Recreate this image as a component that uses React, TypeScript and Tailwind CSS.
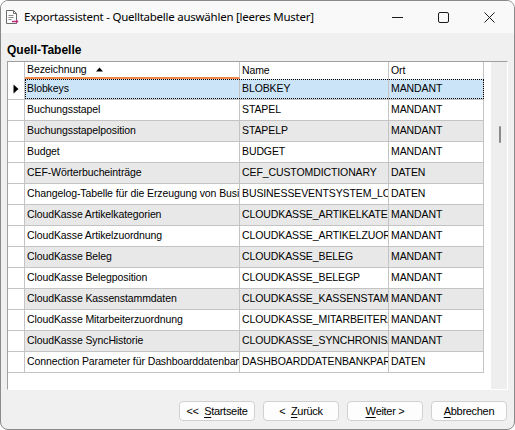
import React from 'react';

type Row = { label: string; name: string; ort: string };

const rows: Row[] = [
  { label: 'Blobkeys', name: 'BLOBKEY', ort: 'MANDANT' },
  { label: 'Buchungsstapel', name: 'STAPEL', ort: 'MANDANT' },
  { label: 'Buchungsstapelposition', name: 'STAPELP', ort: 'MANDANT' },
  { label: 'Budget', name: 'BUDGET', ort: 'MANDANT' },
  { label: 'CEF-Wörterbucheinträge', name: 'CEF_CUSTOMDICTIONARY', ort: 'DATEN' },
  { label: 'Changelog-Tabelle für die Erzeugung von Business-Events', name: 'BUSINESSEVENTSYSTEM_LOG', ort: 'DATEN' },
  { label: 'CloudKasse Artikelkategorien', name: 'CLOUDKASSE_ARTIKELKATEGORIE', ort: 'MANDANT' },
  { label: 'CloudKasse Artikelzuordnung', name: 'CLOUDKASSE_ARTIKELZUORDNUNG', ort: 'MANDANT' },
  { label: 'CloudKasse Beleg', name: 'CLOUDKASSE_BELEG', ort: 'MANDANT' },
  { label: 'CloudKasse Belegposition', name: 'CLOUDKASSE_BELEGP', ort: 'MANDANT' },
  { label: 'CloudKasse Kassenstammdaten', name: 'CLOUDKASSE_KASSENSTAMMDATEN', ort: 'MANDANT' },
  { label: 'CloudKasse Mitarbeiterzuordnung', name: 'CLOUDKASSE_MITARBEITERZUORDNUNG', ort: 'MANDANT' },
  { label: 'CloudKasse SyncHistorie', name: 'CLOUDKASSE_SYNCHRONISATION', ort: 'MANDANT' },
  { label: 'Connection Parameter für Dashboarddatenbank', name: 'DASHBOARDDATENBANKPARAMETER', ort: 'DATEN' },
];

function DocIcon() {
  return (
    <svg width="16" height="16" viewBox="0 0 16 16" className="shrink-0">
      <path d="M2.5 1.5h7l3 3v10h-10z" fill="#fff" stroke="#6b6b6b" strokeWidth="1" />
      <path d="M9.5 1.5v3h3" fill="none" stroke="#6b6b6b" strokeWidth="1" />
      <path d="M4.5 6.5h5M4.5 8.5h5M4.5 10.5h3" stroke="#8a8a8a" strokeWidth="1" />
      <path d="M8 12.5h5" stroke="#b8307e" strokeWidth="1.6" />
      <path d="M12 10.2l2.6 2.3-2.6 2.3z" fill="#b8307e" />
    </svg>
  );
}

function GridRow({ row, index }: { row: Row; index: number }) {
  const selected = index === 0;
  const shade = selected ? 'bg-[#cce4f7]' : index % 2 === 0 ? 'bg-[#e8e8e8]' : 'bg-white';
  return (
    <div className="flex h-[21px] border-b border-[#c4c4c4]">
      <div className="w-[17px] shrink-0 border-r border-[#c4c4c4] bg-white flex items-center justify-center">
        {selected && (
          <svg width="6" height="10" viewBox="0 0 6 10">
            <path d="M0.5 0.5L5.5 5L0.5 9.5z" fill="#000" />
          </svg>
        )}
      </div>
      <div className={`flex ${shade} ${selected ? 'outline outline-1 outline-dotted outline-black -outline-offset-1' : ''}`}>
        <div className="w-[215px] border-r border-[#c4c4c4] pl-[2px] flex items-center overflow-hidden whitespace-nowrap">
          {row.label}
        </div>
        <div className="w-[149px] border-r border-[#c4c4c4] pl-[2px] flex items-center overflow-hidden whitespace-nowrap">
          {row.name}
        </div>
        <div className="w-[95px] border-r border-[#c4c4c4] pl-[2px] flex items-center overflow-hidden whitespace-nowrap">
          {row.ort}
        </div>
      </div>
    </div>
  );
}

function DlgButton({ pre, hot, rest }: { pre?: string; hot: string; rest: string }) {
  return (
    <button className="w-[76px] h-[20px] rounded-[4px] border border-[#d0d0d0] bg-[#fdfdfd] text-[11px] tracking-[-0.3px] text-black flex items-center justify-center whitespace-pre">
      {pre}
      <span className="underline underline-offset-2">{hot}</span>
      {rest}
    </button>
  );
}

export default function App() {
  return (
    <div className="w-[515px] h-[430px] bg-white">
      <div
        className="w-[515px] h-[430px] flex flex-col border border-[#8a8a8a] rounded-lg overflow-hidden bg-[#f0f0f0]"
        style={{ fontFamily: '"Liberation Sans", Arial, sans-serif' }}
      >
        {/* title bar */}
        <div className="h-[32px] shrink-0 bg-[#f9f9f9] flex items-center">
          <div className="pl-[3px] pr-[4px] flex items-center">
            <DocIcon />
          </div>
          <span
            className="text-[11.5px] text-black leading-none tracking-[-0.25px]"
            style={{ fontFamily: '"Noto Sans", "Open Sans", sans-serif' }}
          >
            Exportassistent - Quelltabelle auswählen [leeres Muster]
          </span>
          <div className="ml-auto flex items-center h-full">
            <div className="w-[46px] h-full flex items-center justify-center">
              <svg width="11" height="11" viewBox="0 0 11 11">
                <path d="M0 5.5h11" stroke="#1a1a1a" strokeWidth="1" />
              </svg>
            </div>
            <div className="w-[46px] h-full flex items-center justify-center">
              <svg width="11" height="11" viewBox="0 0 11 11">
                <rect x="0.5" y="0.5" width="10" height="10" rx="1.5" fill="none" stroke="#1a1a1a" strokeWidth="1" />
              </svg>
            </div>
            <div className="w-[46px] h-full flex items-center justify-center mr-[2px]">
              <svg width="11" height="11" viewBox="0 0 11 11">
                <path d="M0.5 0.5l10 10M10.5 0.5l-10 10" stroke="#1a1a1a" strokeWidth="1" />
              </svg>
            </div>
          </div>
        </div>

        {/* body */}
        <div className="flex-1 flex flex-col pl-[6px] pr-[6px]">
          <div className="pt-[11px] h-[28px] text-[12px] font-bold text-black leading-none">
            Quell-Tabelle
          </div>

          <div className="w-[501px] h-[329px] flex border-t border-l border-[#a0a0a0] border-r border-r-white border-b border-b-white bg-white text-[10.5px] tracking-[-0.1px] text-black">
            <div className="w-[483px] flex flex-col">
              {/* header */}
              <div className="flex h-[17px]">
                <div className="w-[17px] shrink-0 border-r border-[#c4c4c4]" />
                <div className="w-[215px] border-r border-[#c4c4c4] pl-[2px] flex items-center border-b-2 border-b-[#f08a4b]">
                  <span>Bezeichnung</span>
                  <svg width="7" height="5" viewBox="0 0 7 5" className="ml-[9px]">
                    <path d="M0 4.5L3.5 0.5L7 4.5z" fill="#000" />
                  </svg>
                </div>
                <div className="w-[149px] border-r border-[#c4c4c4] pl-[2px] flex items-center">Name</div>
                <div className="w-[95px] border-r border-[#c4c4c4] pl-[2px] flex items-center">Ort</div>
              </div>
              {rows.map((r, i) => (
                <GridRow key={r.name} row={r} index={i} />
              ))}
            </div>
            <div className="w-[7px]" />
            <div className="w-[16px] bg-[#eeeeee] flex justify-center pt-[64px]">
              <div className="w-[2px] h-[17px] bg-[#8a8a8a] rounded-full ml-[1px]" />
            </div>
          </div>

          <div className="mt-auto mb-[8px] flex justify-end gap-[8px] pr-[1px]">
            <DlgButton pre="<<  " hot="S" rest="tartseite" />
            <DlgButton pre="<  " hot="Z" rest="urück" />
            <DlgButton hot="W" rest="eiter >" />
            <DlgButton hot="A" rest="bbrechen" />
          </div>
        </div>
      </div>
    </div>
  );
}
